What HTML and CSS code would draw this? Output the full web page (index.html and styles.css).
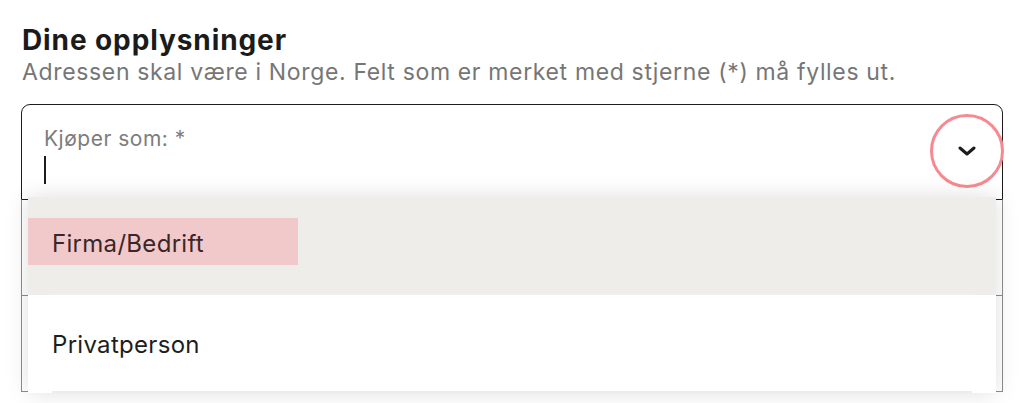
FILE: index.html
```html
<!DOCTYPE html>
<html lang="no">
<head>
<meta charset="utf-8">
<title>Dine opplysninger</title>
<link rel="stylesheet" href="styles.css">
</head>
<body>
<main class="form">
  <h2 class="title">Dine opplysninger</h2>
  <p class="subtitle">Adressen skal være i Norge. Felt som er merket med stjerne (*) må fylles ut.</p>
  <div class="fields">
    <div class="select">
      <div class="select-body">
        <span class="label">Kjøper som: *</span>
        <span class="caret"></span>
      </div>
      <span class="toggle">
        <svg width="18" height="10" viewBox="0 0 18 10"><path d="M2 2 L9 8 L16 2" fill="none" stroke="#1c1c1c" stroke-width="3" stroke-linecap="round" stroke-linejoin="round"/></svg>
      </span>
      <ul class="menu">
        <li class="option option-active"><span class="mark">Firma/Bedrift</span></li>
        <li class="option">Privatperson</li>
      </ul>
    </div>
    <div class="field"></div>
    <div class="field"></div>
  </div>
</main>
</body>
</html>
```

FILE: styles.css
```css
* { box-sizing: border-box; }
html, body { margin: 0; padding: 0; background: #fff; }
body { font-family: Inter, "Noto Sans", sans-serif; color: #1c1c1c; overflow: hidden; height: 403px; }

.form { padding: 23px 22px 0 21px; }

.title {
  margin: 0 0 0 1px;
  font-size: 28px;
  line-height: 34px;
  font-weight: 700;
  color: #1b1b1b;
  letter-spacing: 0.9px;
}

.subtitle {
  margin: 0 0 0 1px;
  font-size: 23px;
  line-height: 30px;
  color: #767676;
  letter-spacing: 0.65px;
}

.fields { margin-top: 17px; }

.select {
  position: relative;
  height: 96px;
  border: 1.5px solid #1c1c1c;
  border-radius: 9px 9px 0 0;
  display: flex;
  align-items: center;
  padding: 0 21px 0 22px;
}

.select-body { flex: 1; display: flex; flex-direction: column; align-self: flex-start; padding-top: 21px; }
.label { font-size: 21px; line-height: 26px; color: #7d7d7d; letter-spacing: 0.5px; }
.caret { width: 2px; height: 28px; background: #1c1c1c; margin-top: 4px; }

.toggle {
  width: 74px; height: 74px;
  border: 3px solid #f78a90;
  border-radius: 50%;
  display: flex; align-items: center; justify-content: center;
  margin-right: -23px;
  margin-top: -2px;
}

.menu {
  position: absolute;
  top: 92px; left: 6px; right: 6px;
  margin: 0; padding: 0;
  list-style: none;
  background: #fff;
  box-shadow: 0 0 22px rgba(0,0,0,0.13);
  z-index: 2;
}

.option {
  position: relative;
  height: 98px;
  display: flex; align-items: center;
  padding-left: 24px;
  font-size: 24px;
  letter-spacing: 0.3px;
  color: #1e1e1e;
}
.option::after {
  content: "";
  position: absolute;
  left: 24px; right: 24px; bottom: 0;
  height: 2px;
  background: #ececec;
}
.option-active { background: #eeedea; align-items: flex-start; padding: 21px 0 0 0; }
.option-active::after { background: #f0efec; }
.mark {
  display: flex; align-items: center;
  width: 270px; height: 47px;
  padding: 4px 0 0 24px;
  background: #f2c9ca;
  color: #3b2628;
}

.field {
  height: 96px;
  border: 1.5px solid #8c8c8c;
  border-top: 0;
}
```
